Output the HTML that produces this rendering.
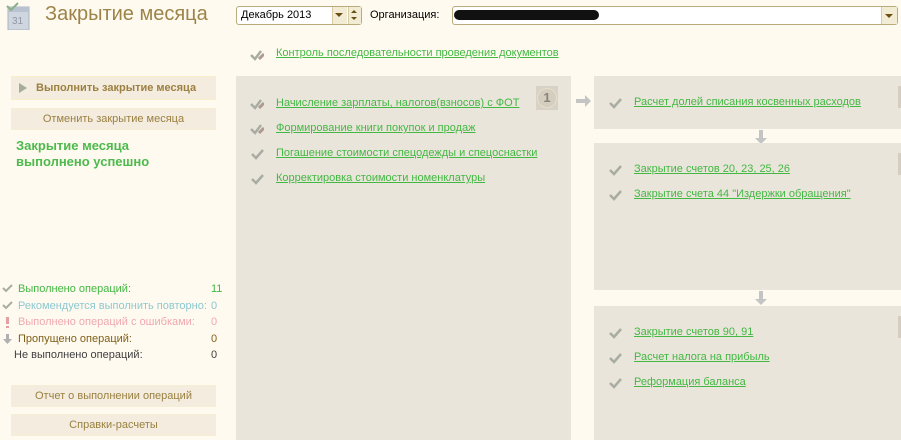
<!DOCTYPE html>
<html><head><meta charset="utf-8"><style>
*{margin:0;padding:0;box-sizing:border-box}
body{width:901px;height:440px;background:#fffaef;font-family:"Liberation Sans",sans-serif;font-size:11px;position:relative;overflow:hidden}
.a{position:absolute;white-space:nowrap}
.p{position:absolute;background:#eae5db}
.l{position:absolute;color:#43b843;text-decoration:underline;white-space:nowrap;line-height:13px}
.ck{position:absolute;width:14px;height:12px}
.btn{position:absolute;left:11px;width:205px;height:22px;background:#f3ecdf;border:1px solid #f6eed3;color:#9a8040;text-align:center;line-height:20px}
</style></head><body>
<!-- header icon -->
<svg class="a" style="left:6px;top:2px" width="26" height="28"><rect x="2" y="5" width="21" height="23" fill="#cfd6e0" stroke="#aab3c0"/><rect x="2" y="5" width="21" height="5" fill="#b8c2d0"/><text x="6" y="22" font-size="10" fill="#8f98a6" font-family="Liberation Sans">31</text><path d="M1 4 L5 8 L12 1" stroke="#8ab08a" stroke-width="2" fill="none"/></svg>
<div class="a" style="left:45px;top:3px;font-size:20px;color:#9c8348">Закрытие месяца</div>
<!-- date -->
<div class="a" style="left:236px;top:6px;width:126px;height:19px;background:#fff;border:1px solid #b9ab7c;border-radius:3px"></div>
<div class="a" style="left:241px;top:9px;font-size:11px;color:#000">Декабрь 2013</div>
<div class="a" style="left:332px;top:7px;width:15px;height:17px;background:#f3ecd5;border-left:1px solid #d8cca0"></div>
<div class="a" style="left:335px;top:13px;width:0;height:0;border-left:4px solid transparent;border-right:4px solid transparent;border-top:4px solid #6b4f10"></div>
<div class="a" style="left:348px;top:7px;width:13px;height:17px;background:#f3ecd5;border-left:1px solid #d8cca0"></div>
<div class="a" style="left:351px;top:10px;border-left:3px solid transparent;border-right:3px solid transparent;border-bottom:3px solid #6b4f10"></div>
<div class="a" style="left:351px;top:17px;border-left:3px solid transparent;border-right:3px solid transparent;border-top:3px solid #6b4f10"></div>
<div class="a" style="left:370px;top:9px;color:#000">Организация:</div>
<!-- org -->
<div class="a" style="left:452px;top:6px;width:446px;height:19px;background:#fff;border:1px solid #b9ab7c;border-radius:3px"></div>
<div class="a" style="left:881px;top:7px;width:16px;height:17px;background:#f3ecd5;border-left:1px solid #d8cca0"></div>
<div class="a" style="left:885px;top:14px;border-left:4px solid transparent;border-right:4px solid transparent;border-top:4px solid #6b4f10"></div>
<div class="a" style="left:454px;top:10px;width:145px;height:10px;background:#111;border-radius:5px"></div>
<!-- control link -->
<svg class="ck" style="left:250px;top:49px" width="16" height="12"><path d="M1 6 L5 10 L11 2" stroke="#a8ada4" stroke-width="2.5" fill="none"/><path d="M9 10 L14 5" stroke="#b09a90" stroke-width="3"/></svg>
<div class="l" style="left:276px;top:47px">Контроль последовательности проведения документов</div>
<!-- left column -->
<div class="a" style="left:11px;top:76px;width:205px;height:24px;background:#f3ecdf;border:1px solid #f8eec8"></div>
<div class="a" style="left:19px;top:83px;border-top:5px solid transparent;border-bottom:5px solid transparent;border-left:8px solid #a4ad9c"></div>
<div class="a" style="left:36px;top:82px;font-weight:bold;color:#9c8040">Выполнить закрытие месяца</div>
<div class="btn" style="top:108px">Отменить закрытие месяца</div>
<div class="a" style="left:16px;top:138px;font-size:13px;font-weight:bold;color:#4cba4c;line-height:16px">Закрытие месяца<br>выполнено успешно</div>
<svg class="a" style="left:2px;top:283px" width="12" height="80"><path d="M1 5 L4 8 L10 2" stroke="#a8ada4" stroke-width="2" fill="none"/><path d="M1 22 L4 25 L10 19" stroke="#a8ada4" stroke-width="2" fill="none"/><rect x="4" y="34" width="3" height="7" fill="#e4a0a0"/><rect x="4" y="43" width="3" height="2" fill="#e4a0a0"/><path d="M4 51 h3 v5 h3 l-4.5 5 l-4.5 -5 h3z" fill="#b0b0b0"/></svg>
<div class="a" style="left:18px;top:283px;color:#43b843">Выполнено операций:</div><div class="a" style="left:211px;top:283px;color:#43b843">11</div>
<div class="a" style="left:18px;top:300px;color:#8cc8d0">Рекомендуется выполнить повторно:</div><div class="a" style="left:211px;top:300px;color:#8cc8d0">0</div>
<div class="a" style="left:18px;top:316px;color:#f0a8b0">Выполнено операций с ошибками:</div><div class="a" style="left:211px;top:316px;color:#f0a8b0">0</div>
<div class="a" style="left:18px;top:333px;color:#806018">Пропущено операций:</div><div class="a" style="left:211px;top:333px;color:#806018">0</div>
<div class="a" style="left:14px;top:349px;color:#404040">Не выполнено операций:</div><div class="a" style="left:211px;top:349px;color:#404040">0</div>
<div class="btn" style="top:385px">Отчет о выполнении операций</div>
<div class="btn" style="top:414px">Справки-расчеты</div>
<!-- middle panel -->
<div class="p" style="left:236px;top:76px;width:335px;height:364px"></div>
<div class="a" style="left:536px;top:86px;width:22px;height:24px;background:#d8d2c6"></div>
<div class="a" style="left:537px;top:88px;width:20px;height:20px;border-radius:50%;background:#d4cdc0;border:1px solid #e6dfc8;color:#8a8478;font-weight:bold;font-size:13px;text-align:center;line-height:18px">1</div>
<svg class="ck" style="left:250px;top:98px" width="16" height="12"><path d="M1 6 L5 10 L11 2" stroke="#a8ada4" stroke-width="2.5" fill="none"/><path d="M9 10 L14 5" stroke="#b09a90" stroke-width="3"/></svg>
<div class="l" style="left:276px;top:97px">Начисление зарплаты, налогов(взносов) с ФОТ</div>
<svg class="ck" style="left:250px;top:123px" width="16" height="12"><path d="M1 6 L5 10 L11 2" stroke="#a8ada4" stroke-width="2.5" fill="none"/><path d="M9 10 L14 5" stroke="#b09a90" stroke-width="3"/></svg>
<div class="l" style="left:276px;top:122px">Формирование книги покупок и продаж</div>
<svg class="ck" style="left:251px;top:148px"><path d="M1 6 L5 10 L12 2" stroke="#a8ada4" stroke-width="2.5" fill="none"/></svg>
<div class="l" style="left:276px;top:147px">Погашение стоимости спецодежды и спецоснастки</div>
<svg class="ck" style="left:251px;top:173px"><path d="M1 6 L5 10 L12 2" stroke="#a8ada4" stroke-width="2.5" fill="none"/></svg>
<div class="l" style="left:276px;top:172px">Корректировка стоимости номенклатуры</div>
<!-- arrows -->
<svg class="a" style="left:576px;top:95px" width="16" height="12"><path d="M0 4 h9 v-4 l6 6 l-6 6 v-4 h-9z" fill="#c4c4c4"/></svg>
<svg class="a" style="left:755px;top:130px" width="12" height="14"><path d="M4 0 h4 v8 h4 l-6 6 l-6 -6 h4z" fill="#c4c4c4"/></svg>
<svg class="a" style="left:755px;top:291px" width="12" height="14"><path d="M4 0 h4 v8 h4 l-6 6 l-6 -6 h4z" fill="#c4c4c4"/></svg>
<!-- right panels -->
<div class="p" style="left:594px;top:76px;width:307px;height:53px"></div>
<div class="p" style="left:594px;top:143px;width:307px;height:147px"></div>
<div class="p" style="left:594px;top:306px;width:307px;height:134px"></div>
<div class="a" style="left:898px;top:86px;width:3px;height:22px;background:#d4cdc0"></div>
<div class="a" style="left:898px;top:153px;width:3px;height:22px;background:#d4cdc0"></div>
<div class="a" style="left:898px;top:316px;width:3px;height:22px;background:#d4cdc0"></div>
<svg class="ck" style="left:609px;top:97px"><path d="M1 6 L5 10 L12 2" stroke="#a8ada4" stroke-width="2.5" fill="none"/></svg>
<div class="l" style="left:634px;top:96px">Расчет долей списания косвенных расходов</div>
<svg class="ck" style="left:609px;top:164px"><path d="M1 6 L5 10 L12 2" stroke="#a8ada4" stroke-width="2.5" fill="none"/></svg>
<div class="l" style="left:634px;top:163px">Закрытие счетов 20, 23, 25, 26</div>
<svg class="ck" style="left:609px;top:189px"><path d="M1 6 L5 10 L12 2" stroke="#a8ada4" stroke-width="2.5" fill="none"/></svg>
<div class="l" style="left:634px;top:188px">Закрытие счета 44 "Издержки обращения"</div>
<svg class="ck" style="left:609px;top:327px"><path d="M1 6 L5 10 L12 2" stroke="#a8ada4" stroke-width="2.5" fill="none"/></svg>
<div class="l" style="left:634px;top:326px">Закрытие счетов 90, 91</div>
<svg class="ck" style="left:609px;top:352px"><path d="M1 6 L5 10 L12 2" stroke="#a8ada4" stroke-width="2.5" fill="none"/></svg>
<div class="l" style="left:634px;top:351px">Расчет налога на прибыль</div>
<svg class="ck" style="left:609px;top:377px"><path d="M1 6 L5 10 L12 2" stroke="#a8ada4" stroke-width="2.5" fill="none"/></svg>
<div class="l" style="left:634px;top:376px">Реформация баланса</div>
</body></html>
